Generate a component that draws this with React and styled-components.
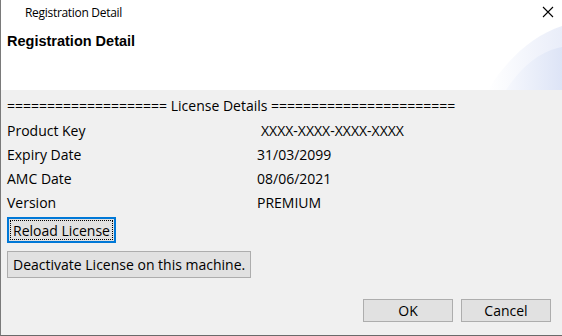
import React from "react";
import styled, { createGlobalStyle } from "styled-components";

const Global = createGlobalStyle`
  html, body { margin: 0; padding: 0; background: #ffffff; }
  * { box-sizing: border-box; }
`;

const Window = styled.div`
  width: 562px;
  height: 336px;
  display: flex;
  flex-direction: column;
  border-left: 1px solid #7a7a7a;
  border-bottom: 1px solid #6a6a6a;
  font-family: "Open Sans", "Noto Sans", sans-serif;
  color: #000;
  overflow: hidden;
`;

const TitleBar = styled.div`
  height: 24px;
  display: flex;
  align-items: center;
  justify-content: space-between;
  padding-left: 24px;
  padding-right: 8px;
  background: #fff;
`;

const TitleText = styled.span`
  font-size: 12px;
  letter-spacing: -0.3px;
`;

const CloseIcon = styled.svg`
  width: 12px;
  height: 12px;
  display: block;
`;

const Header = styled.div`
  position: relative;
  height: 66px;
  background: #fff;
  padding: 9px 0 0 6px;
  overflow: hidden;
`;

const HeaderTitle = styled.h1`
  margin: 0;
  font-family: "Liberation Sans", Arial, sans-serif;
  font-weight: bold;
  font-size: 14.5px;
  position: relative;
  z-index: 1;
`;

const Swoosh = styled.svg`
  position: absolute;
  right: 0;
  bottom: 0;
  width: 80px;
  height: 66px;
`;

const Body = styled.div`
  flex: 1;
  background: #f0f0f0;
  padding: 4px 0 0 6px;
  display: flex;
  flex-direction: column;
  font-size: 14px;
`;

const Separator = styled.div`
  height: 24px;
  line-height: 24px;
  white-space: pre;
`;

const Grid = styled.div`
  display: grid;
  grid-template-columns: 250px auto;
  grid-auto-rows: 24px;
  align-items: center;
`;

const Label = styled.div``;
const Value = styled.div`
  padding-left: ${(p) => (p.$indent ? "4px" : "0")};
`;

const Button = styled.button`
  font-family: "Open Sans", "Noto Sans", sans-serif;
  font-size: 14px;
  color: #000;
  background: #e1e1e1;
  border: 1px solid #adadad;
  padding: 0 ${(p) => p.$px ?? 4}px;
  height: ${(p) => p.$h || 23}px;
  width: ${(p) => (p.$w ? p.$w + "px" : "auto")};
  align-self: flex-start;
  cursor: default;
  margin-top: ${(p) => p.$mt || 0}px;
  ${(p) =>
    p.$focused &&
    `
    border: 2px solid #0078d7;
    outline: 1px dotted #000;
    outline-offset: -4px;
  `}
`;

const Footer = styled.div`
  margin-top: auto;
  display: flex;
  justify-content: flex-end;
  gap: 8px;
  padding: 0 11px 13px 0;
`;

export default function App() {
  return (
    <>
      <Global />
      <Window>
        <TitleBar>
          <TitleText>Registration Detail</TitleText>
          <CloseIcon viewBox="0 0 12 12">
            <path d="M1 1 L11 11 M11 1 L1 11" stroke="#000" strokeWidth="1.1" />
          </CloseIcon>
        </TitleBar>
        <Header>
          <HeaderTitle>Registration Detail</HeaderTitle>
          <Swoosh viewBox="0 0 80 66">
            <defs>
              <linearGradient id="g1" x1="0" y1="0" x2="1" y2="0">
                <stop offset="0" stopColor="#ffffff" />
                <stop offset="1" stopColor="#e9edf9" />
              </linearGradient>
              <linearGradient id="g2" x1="0" y1="0" x2="1" y2="0">
                <stop offset="0" stopColor="#f6f8fd" />
                <stop offset="1" stopColor="#dde4f6" />
              </linearGradient>
            </defs>
            <path d="M6 66 C 25 35, 50 12, 80 2 L80 66 Z" fill="url(#g1)" />
            <path d="M24 66 C 38 45, 55 28, 80 23 L80 66 Z" fill="url(#g2)" />
          </Swoosh>
        </Header>
        <Body>
          <Separator>{"==================== License Details ======================="}</Separator>
          <Grid>
            <Label>Product Key</Label>
            <Value $indent>XXXX-XXXX-XXXX-XXXX</Value>
            <Label>Expiry Date</Label>
            <Value>31/03/2099</Value>
            <Label>AMC Date</Label>
            <Value>08/06/2021</Value>
            <Label>Version</Label>
            <Value>PREMIUM</Value>
          </Grid>
          <Button $focused $h={26} $mt={3}>Reload License</Button>
          <Button $h={27} $mt={8} $px={5}>Deactivate License on this machine.</Button>
          <Footer>
            <Button $w={90}>OK</Button>
            <Button $w={90}>Cancel</Button>
          </Footer>
        </Body>
      </Window>
    </>
  );
}
